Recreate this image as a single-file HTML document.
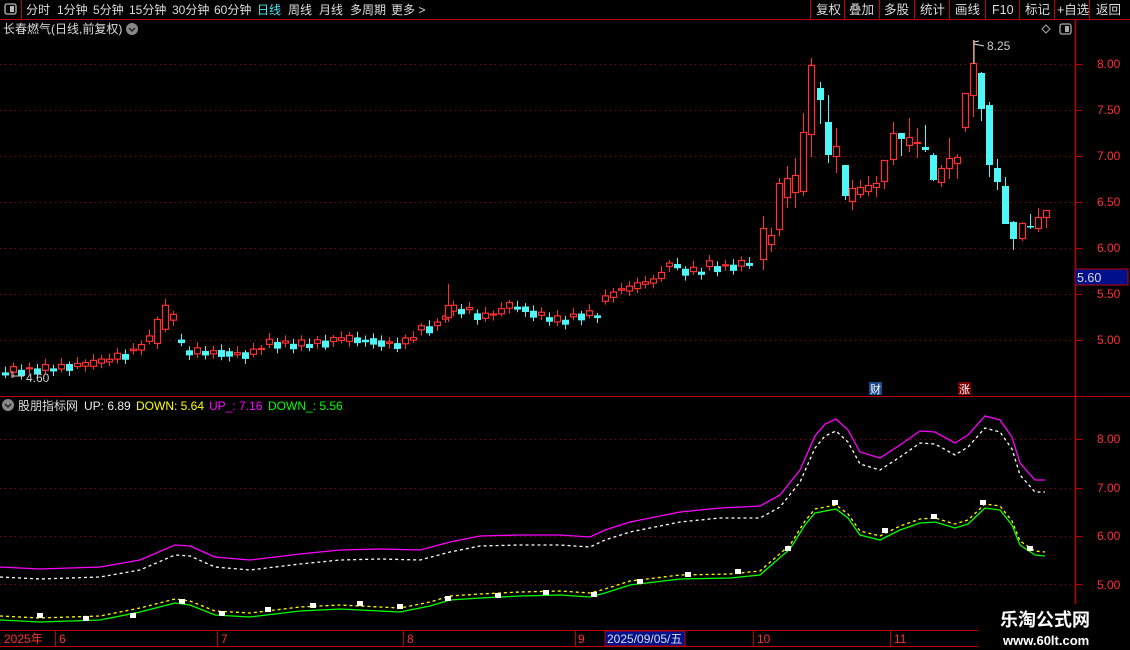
<!DOCTYPE html>
<html><head><meta charset="utf-8">
<style>
html,body{margin:0;padding:0;background:#000;width:1130px;height:650px;overflow:hidden}
svg{display:block}
text{font-family:"Liberation Sans","Noto Sans CJK SC",sans-serif}
</style></head>
<body>
<svg id="s" width="1130" height="650" xmlns="http://www.w3.org/2000/svg">
<rect width="1130" height="650" fill="#000"/>
<line x1="0" y1="19.5" x2="1130" y2="19.5" stroke="#c00000"/>
<line x1="21.5" y1="0" x2="21.5" y2="19" stroke="#c00000"/>
<rect x="5" y="4" width="11" height="10" rx="2" fill="none" stroke="#bbb" stroke-width="1.3"/>
<rect x="10" y="6" width="4" height="6" fill="#bbb"/>
<g font-size="12" fill="#ddd">
<text x="26" y="14">分时</text><text x="57" y="14">1分钟</text><text x="93" y="14">5分钟</text>
<text x="129" y="14">15分钟</text><text x="172" y="14">30分钟</text><text x="214" y="14">60分钟</text>
<text x="257" y="14" fill="#48e8f0">日线</text><text x="288" y="14">周线</text><text x="319" y="14">月线</text>
<text x="350" y="14">多周期</text><text x="391" y="14">更多 &gt;</text>
</g>
<g font-size="12.5" fill="#ddd">
<text x="816" y="14">复权</text><text x="849" y="14">叠加</text><text x="884" y="14">多股</text>
<text x="920" y="14">统计</text><text x="955" y="14">画线</text><text x="992" y="14">F10</text>
<text x="1025" y="14">标记</text><text x="1057" y="14">+自选</text><text x="1096" y="14">返回</text>
</g>
<g stroke="#c00000">
<line x1="810.5" y1="0" x2="810.5" y2="19"/><line x1="844.5" y1="0" x2="844.5" y2="19"/>
<line x1="879.5" y1="0" x2="879.5" y2="19"/><line x1="914.5" y1="0" x2="914.5" y2="19"/>
<line x1="949.5" y1="0" x2="949.5" y2="19"/><line x1="985.5" y1="0" x2="985.5" y2="19"/>
<line x1="1019.5" y1="0" x2="1019.5" y2="19"/><line x1="1054.5" y1="0" x2="1054.5" y2="19"/>
<line x1="1089.5" y1="0" x2="1089.5" y2="19"/>
</g>
<text x="3" y="33" font-size="12" fill="#ddd">长春燃气(日线,前复权)</text>
<circle cx="132" cy="29" r="6" fill="#888"/><path d="M129 28 L132 31 L135 28" stroke="#222" stroke-width="1.5" fill="none"/>
<path d="M1042 29 L1046 25 L1050 29 L1046 33 Z" fill="none" stroke="#aaa"/>
<rect x="1060" y="24" width="11" height="10" rx="2" fill="none" stroke="#aaa" stroke-width="1.3"/><rect x="1065" y="26" width="4" height="6" fill="#aaa"/>
<line x1="1075.5" y1="20" x2="1075.5" y2="630" stroke="#c00000" stroke-width="1.5"/>
<line x1="0" y1="396.5" x2="1130" y2="396.5" stroke="#c00000"/>
<g id="grid"></g>
<g font-size="12" fill="#ff3030">
<text x="1097" y="68">8.00</text><text x="1097" y="114">7.50</text><text x="1097" y="160">7.00</text>
<text x="1097" y="206">6.50</text><text x="1097" y="252">6.00</text><text x="1097" y="298">5.50</text><text x="1097" y="344">5.00</text>
<text x="1097" y="443">8.00</text><text x="1097" y="492">7.00</text><text x="1097" y="540">6.00</text><text x="1097" y="589">5.00</text>
</g>
<rect x="1075" y="269" width="53" height="16" fill="#00108a" stroke="#c00000"/>
<text x="1077" y="282" font-size="12.5" fill="#ddd">5.60</text>
<g id="c"></g>
<path d="M974 64 L974 40 M974 42 L979 41 M974 44 L984 46" stroke="#ddd" fill="none"/>
<text x="987" y="50" font-size="12" fill="#ccc">8.25</text>
<path d="M12 371 L12 378 M12 376 L24 376" stroke="#ccc" fill="none"/>
<text x="26" y="382" font-size="12" fill="#ccc">4.60</text>
<rect x="869" y="382" width="13" height="13" fill="#1a4a8a"/><text x="870" y="393" font-size="11" fill="#fff">财</text>
<rect x="958" y="382" width="13" height="13" fill="#7a0000"/><text x="959" y="393" font-size="11" fill="#fff">涨</text>
<circle cx="8" cy="405" r="6" fill="#888"/><path d="M5 404 L8 407 L11 404" stroke="#222" stroke-width="1.5" fill="none"/>
<text y="410" font-size="12"><tspan x="18" fill="#ddd">股朋指标网</tspan><tspan x="84" fill="#eee">UP: 6.89</tspan><tspan x="136" fill="#ffff00">DOWN: 5.64</tspan><tspan x="209" fill="#ff00ff">UP_: 7.16</tspan><tspan x="268" fill="#00ff00">DOWN_: 5.56</tspan></text>
<g id="ind"></g>
<line x1="0" y1="630.5" x2="1075" y2="630.5" stroke="#c00000"/>
<line x1="0" y1="646.5" x2="1075" y2="646.5" stroke="#c00000"/>
<g stroke="#c00000">
<line x1="55.5" y1="631" x2="55.5" y2="646"/><line x1="217.5" y1="631" x2="217.5" y2="646"/>
<line x1="403.5" y1="631" x2="403.5" y2="646"/><line x1="575.5" y1="631" x2="575.5" y2="646"/>
<line x1="753.5" y1="631" x2="753.5" y2="646"/><line x1="890.5" y1="631" x2="890.5" y2="646"/>
</g>
<rect x="605" y="631" width="80" height="15" fill="#00108a" stroke="#c00000"/>
<g font-size="12" fill="#ff3030">
<text x="4" y="643">2025年</text><text x="59" y="643">6</text><text x="221" y="643">7</text>
<text x="407" y="643">8</text><text x="578" y="643">9</text><text x="757" y="643">10</text><text x="894" y="643">11</text>
</g>
<text x="607" y="643" font-size="12" fill="#ddd">2025/09/05/五</text>
<rect x="978" y="604" width="152" height="46" fill="#000"/>
<text x="1000" y="626" font-size="18" font-weight="bold" fill="#fff">乐淘公式网</text>
<text x="1003" y="645" font-size="13" font-weight="bold" fill="#fff" font-family="Liberation Serif,serif">www.60lt.com</text>
</svg>
<script>
var NS='http://www.w3.org/2000/svg';
function add(g,tag,a){var e=document.createElementNS(NS,tag);for(var k in a)e.setAttribute(k,a[k]);document.getElementById(g).appendChild(e);return e;}
[64,110,156,202,248,294,340,439,488,536,584].forEach(function(y){add('grid','line',{x1:0,y1:y+.5,x2:1075,y2:y+.5,stroke:'#a00000','stroke-dasharray':'1 4'});add('grid','line',{x1:1075,y1:y+.5,x2:1082,y2:y+.5,stroke:'#c00000'});});
var R='#ff3030',C='#50f5f5';
function candle(x,t,b,wt,wb,up){
 if(b-t<1.5){b=t+1.5;}
 add('c','line',{x1:x+.5,y1:wt,x2:x+.5,y2:wb,stroke:up?R:C,'stroke-width':1});
 if(up)add('c','rect',{x:x-2.5,y:t+.5,width:6,height:b-t-1,fill:'#000',stroke:R,'stroke-width':1.2});
 else add('c','rect',{x:x-3,y:t,width:7,height:b-t,fill:C});
}
var kp=[[5,372],[60,368],[100,362],[130,354],[140,346],[150,340],[158,328],[166,318],[174,315],[182,347],[190,352],[200,352],[250,355],[260,348],[270,343],[300,345],[330,342],[340,338],[400,345],[410,340],[420,330],[440,325],[448,310],[456,310],[470,310],[480,318],[500,312],[510,305],[530,312],[550,318],[560,322],[580,315],[600,315],[605,300],[615,292],[640,285],[660,278],[670,262],[680,270],[700,272],[710,265],[720,268],[740,265],[755,262]];
function yb(x){for(var i=1;i<kp.length;i++){if(x<=kp[i][0]){var a=kp[i-1],b=kp[i];return a[1]+(b[1]-a[1])*(x-a[0])/(b[0]-a[0]);}}return 262;}
var prev=372;
for(var x=5;x<=755;x+=8){
 var c=yb(x), n=Math.sin(x*0.37)*2;
 var cy=c+n, up=cy<prev;
 var h=2+Math.abs(Math.sin(x*1.3))*5;
 if(x>=150&&x<=170)h=25;
 var t=cy-h/2,b=cy+h/2;
 candle(x,t,b,t-2-Math.abs(Math.sin(x))*4,b+2+Math.abs(Math.cos(x))*3,up);
 prev=cy;
}
candle(448,305,318,284,322,true);
var rd=[[763,228,260,216,270,1],[771,235,245,228,252,1],[779,183,230,178,236,1],[787,178,198,166,208,1],[795,175,193,158,208,1],[803,132,192,113,196,1],[811,65,135,58,157,1],[820,88,100,82,124,0],[828,122,155,95,163,0],[836,146,157,128,173,1],[845,165,196,165,200,0],[852,188,202,180,210,1],[860,187,195,180,198,1],[868,185,192,176,196,1],[876,183,188,176,197,1],[884,160,182,161,189,1],[893,133,160,122,165,1],[901,133,139,133,156,0],[909,137,146,118,152,1],[917,142,144,128,158,1],[925,147,150,125,152,0],[933,155,180,153,181,0],[941,168,183,165,187,1],[949,158,169,138,179,1],[957,157,164,154,179,1],[965,93,128,93,132,1],[973,63,96,40,117,1],[981,73,109,72,121,0],[989,105,165,102,177,0],[997,168,182,159,190,0],[1005,186,224,177,224,0],[1013,222,239,221,250,0],[1022,223,239,222,241,1],[1030,226,227,214,229,0],[1038,217,229,208,232,1],[1046,210,218,210,228,1]];
rd.forEach(function(d){candle(d[0],d[1],d[2],d[3],d[4],!!d[5]);});
function pl(pts,col,dash,w){add('ind','polyline',{points:pts.map(function(p){return p.join(',')}).join(' '),fill:'none',stroke:col,'stroke-width':w||1.3,'stroke-dasharray':dash||''});}
var up=[[0,567],[40,569],[100,567],[140,560],[175,545],[190,546],[215,557],[250,560],[300,554],[340,550],[380,549],[420,550],[450,542],[480,536],[520,535],[560,535],[590,537],[605,530],[630,522],[680,512],[720,508],[760,506],[780,495],[800,470],[815,436],[825,424],[836,419],[848,430],[860,452],[880,458],[900,445],[920,431],[935,432],[955,443],[968,435],[985,416],[1000,420],[1012,437],[1020,463],[1035,480],[1045,480]];
pl(up,'#ff00ff');
pl(up.map(function(p){return [p[0],p[1]+(p[0]>750?12:10)]}),'#ffffff','3 3');
var gr=[[0,620],[40,622],[100,620],[140,612],[175,603],[190,605],[215,615],[250,617],[300,611],[340,609],[400,612],[430,606],[450,600],[480,598],[520,596],[560,595],[590,597],[605,593],[630,585],[680,579],[730,578],[760,575],[790,549],[805,525],[815,513],[836,509],[848,518],[860,535],[880,540],[900,530],[920,523],[935,522],[955,528],[968,524],[985,508],[1000,510],[1012,525],[1020,545],[1035,555],[1045,556]];
pl(gr,'#00ff00');
pl(gr.map(function(p){return [p[0],p[1]-4]}),'#ffff00','3 3');
[[40,616],[86,619],[133,616],[182,602],[222,614],[268,610],[313,606],[360,604],[400,607],[448,599],[498,596],[546,593],[594,595],[640,582],[688,575],[738,572],[788,549],[835,503],[885,531],[934,517],[983,503],[1030,549]].forEach(function(p){add('ind','rect',{x:p[0]-3,y:p[1]-3,width:6,height:5,fill:'#fff'});});
</script>
</body></html>
